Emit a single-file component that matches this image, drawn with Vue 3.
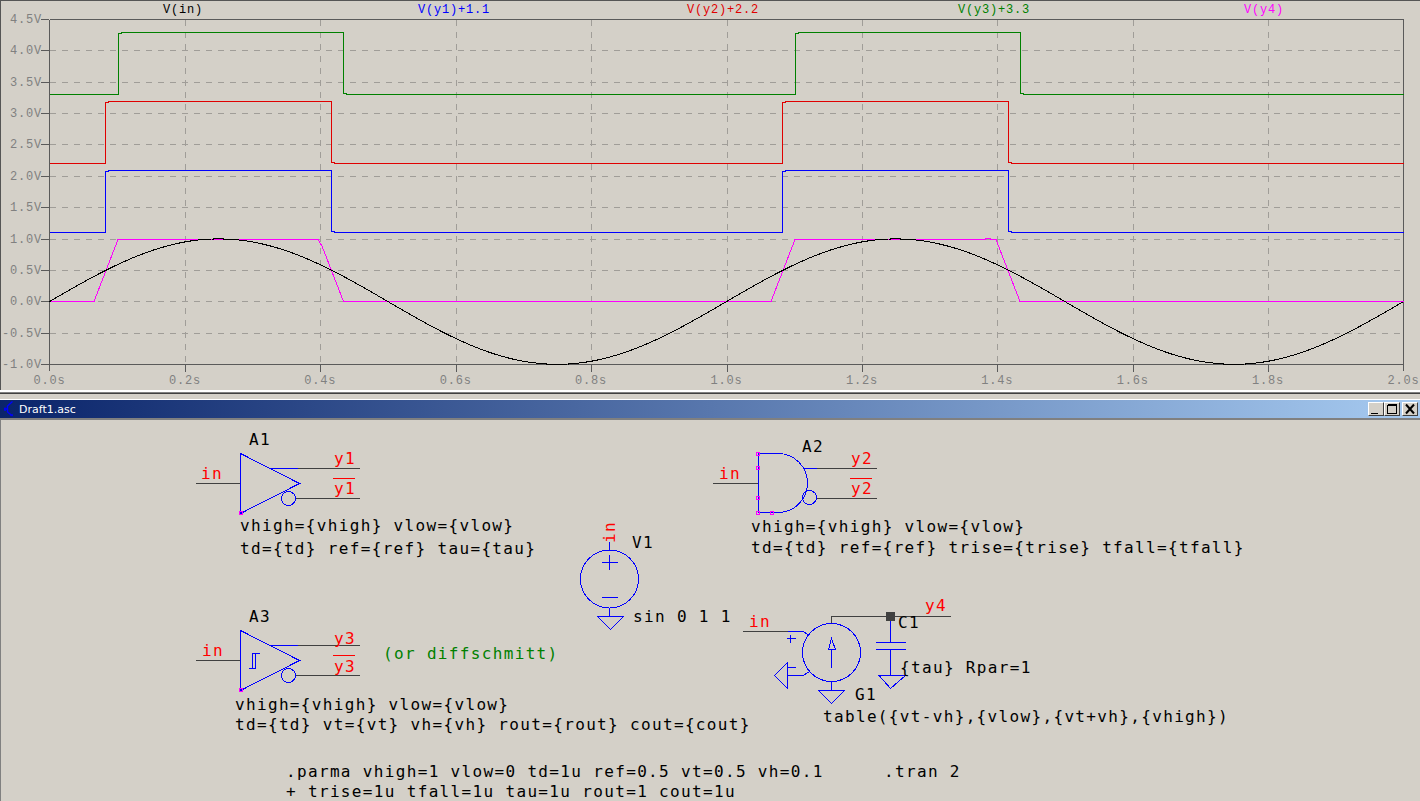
<template>
  <div class="desk">
    <section class="plot">
      <svg class="canvas" viewBox="0 0 1420 390" width="1420" height="390">
        <g class="grid">
          <line v-for="x in gridX" :key="'gx' + x" :x1="x" :x2="x" y1="20" y2="364" />
          <line v-for="y in gridY" :key="'gy' + y" x1="50" x2="1403" :y1="y" :y2="y" />
        </g>
        <path class="frame" :d="framePath" />
        <text v-for="t in yLabels" :key="t.s" class="axis" x="42" text-anchor="end" :y="t.y">{{ t.s }}</text>
        <text v-for="t in xLabels" :key="t.s" class="axis" :x="t.x" text-anchor="middle" y="384">{{ t.s }}</text>
        <text v-for="t in traceLabels" :key="t.s" class="trace-label" :x="t.x" y="13" :fill="t.c">{{ t.s }}</text>
        <polyline class="wave" stroke="#0000ff" :points="blue" />
        <polyline class="wave" stroke="#e00000" :points="red" />
        <polyline class="wave" stroke="#008000" :points="green" />
        <polyline class="wave" stroke="#ff00ff" :points="magenta" />
        <polyline class="wave" stroke="#000000" :points="sine" />
      </svg>
    </section>

    <div class="splitter"></div>

    <header class="titlebar">
      <svg class="app-icon" viewBox="0 0 14 16" width="14" height="16">
        <path d="M9.5 0.5 L4.5 5 V11 L9.5 15 M1 8 H4.5 M2 6.5 V10 M7 14 H10" />
      </svg>
      <span class="title">Draft1.asc</span>
      <div class="win-btns">
        <button class="win-btn">
          <svg viewBox="0 0 14 12" width="14" height="12"><path class="glyph" d="M2 10.5 H9" /></svg>
        </button>
        <button class="win-btn">
          <svg viewBox="0 0 14 12" width="14" height="12"><path class="glyph" d="M2.5 2.5 H11.5 V10.5 H2.5 Z M2.5 1.5 H11.5" /></svg>
        </button>
        <button class="win-btn close">
          <svg viewBox="0 0 14 12" width="14" height="12"><path class="glyph heavy" d="M3 1.5 L11 10.5 M11 1.5 L3 10.5" /></svg>
        </button>
      </div>
    </header>

    <section class="sheet">
      <svg class="canvas" viewBox="1 420 1419 381" width="1419" height="381">
        <path class="wire" :d="wires" />
        <path class="sym" :d="symbols" />
        <g class="sym">
          <circle v-for="c in circles" :key="c.x + '-' + c.y" :cx="c.x" :cy="c.y" :r="c.r" />
        </g>
        <rect v-for="p in pins" :key="p[0] + '-' + p[1]" class="pin" :x="p[0] - 1.5" :y="p[1] - 1.5" width="3" height="3" />
        <rect class="dot" x="886" y="612" width="9" height="9" />
        <path class="bar" :d="overbars" />
        <text v-for="t in texts" :key="t.s + t.x + t.y" class="sch" :class="t.k" :x="t.x" :y="t.y">{{ t.s }}</text>
        <text class="sch net" transform="translate(615 543) rotate(-90)">in</text>
      </svg>
    </section>
  </div>
</template>

<script setup>
const tx = (t) => 49.5 + 677 * t
const vy = (v) => 301.77 - 62.72 * v

const gridX = Array.from({ length: 9 }, (_, i) => Math.round(tx((i + 1) * 0.2)) + 0.5)
const gridY = Array.from({ length: 10 }, (_, i) => Math.floor(vy(4 - i * 0.5)) + 0.5)

let framePath = 'M49.5 19.5 H1403.5 V371 M49.5 19.5 V371 M41 364.5 H1403.5 M41 19.5 H49'
for (const x of gridX) framePath += ` M${x} 364 V372`
for (const y of gridY) framePath += ` M41 ${y} H49`

const yLabels = Array.from({ length: 12 }, (_, i) => {
  const v = 4.5 - i * 0.5
  return { s: v.toFixed(1) + 'V', y: Math.floor(vy(v)) + 4 }
})
const xLabels = Array.from({ length: 11 }, (_, i) => ({
  s: (i * 0.2).toFixed(1) + 's',
  x: tx(i * 0.2),
}))
const traceLabels = [
  { s: 'V(in)', x: 163, c: '#000000' },
  { s: 'V(y1)+1.1', x: 418, c: '#0000ff' },
  { s: 'V(y2)+2.2', x: 687, c: '#e00000' },
  { s: 'V(y3)+3.3', x: 958, c: '#008000' },
  { s: 'V(y4)', x: 1244, c: '#ff00ff' },
]

// square pulses: low level, high level, edges as x pairs
function pulse(lo, hi, edges) {
  const pts = [[49.5, lo]]
  for (const [up, down] of edges) {
    pts.push([up, lo], [up, hi + 1], [up + 3, hi + 1], [up + 3, hi], [down, hi], [down, lo - 1], [down + 3, lo - 1], [down + 3, lo])
  }
  pts.push([1403.5, lo])
  return pts.map((p) => p.join(',')).join(' ')
}

const blue = pulse(232.5, 170.5, [[105.5, 331.5], [782.5, 1008.5]])
const red = pulse(163.5, 101.5, [[105.5, 331.5], [782.5, 1008.5]])
const green = pulse(94.5, 32.5, [[118.5, 343.5], [795.5, 1020.5]])

const magenta = [
  [49.5, 301.5], [94, 301.5], [118, 239.5], [318, 239.5], [322, 246], [343.5, 301.5],
  [771, 301.5], [795, 239.5], [985, 239.5], [986, 238.5], [990, 238.5], [991, 239.5], [996, 239.5], [1020, 301.5], [1403.5, 301.5],
].map((p) => p.join(',')).join(' ')

const sine = Array.from({ length: 1355 }, (_, i) => {
  const x = 49.5 + i
  return `${x},${(301.6 - 62.7 * Math.sin((2 * Math.PI * i) / 677)).toFixed(1)}`
}).join(' ')

const wires = [
  'M196 483.5 H240', 'M298 468.5 H360', 'M296 498.5 H360',
  'M713 483.5 H758', 'M817 468.5 H877', 'M817 498.5 H877',
  'M196 660.5 H240', 'M298 645.5 H360', 'M296 675.5 H360',
  'M743 631.5 H788', 'M831.5 623 V616.5 H951',
].join(' ')

const symbols = [
  // A1
  'M240.5 453.5 L299.5 483.5 L240.5 513.5 Z M270 468.5 H298',
  // A2
  'M758.5 453.5 H778 A29.5 29.5 0 0 1 778 512.5 H758.5 Z M803 468.5 H817',
  // A3
  'M240.5 630.5 L299.5 660.5 L240.5 690.5 Z M270 645.5 H298',
  'M248.5 668.5 H255.5 V653.5 M252.5 668.5 V653.5 H259.5',
  // V1
  'M609.5 542 V550 M601.5 562.5 H617.5 M609.5 555 V570 M601.5 597.5 H617.5 M609.5 608 V616.5',
  'M597.5 616.5 H623.5 L610.5 629.5 Z',
  // G1
  'M788 631.5 H803 L809 635 M786.5 638.5 H795.5 M790.5 635 V643 M787.5 667.5 H795.5',
  'M787.5 662.5 V688.5 L774.5 675.5 Z M787.5 675.5 H803 L809 672',
  'M831.5 668 V649 M828.5 649.5 L831.5 638.5 L835.5 649.5 Z',
  'M831.5 681 V690.5 M818.5 690.5 H844.5 L831.5 703.5 Z',
  // C1
  'M890.5 621 V642.5 M876 642.5 H906 M876 649.5 H906 M890.5 649.5 V675.5 M879 675.5 H905.5 L890.5 688.5 Z',
].join(' ')

const circles = [
  { x: 288.5, y: 498.5, r: 7 },
  { x: 809.5, y: 497.5, r: 7 },
  { x: 288.5, y: 675.5, r: 7 },
  { x: 609.5, y: 579, r: 29 },
  { x: 831.5, y: 652.5, r: 29 },
]

const pins = [
  [241, 513], [241, 690],
  [758, 454], [758, 468], [758, 498], [758, 513], [772, 513],
]

const overbars = 'M333 478.5 H355 M850 478.5 H872 M333 655.5 H355'

const texts = [
  { s: 'A1', x: 249, y: 445 },
  { s: 'in', x: 201, y: 479, k: 'net' },
  { s: 'y1', x: 334, y: 464, k: 'net' },
  { s: 'y1', x: 334, y: 494, k: 'net' },
  { s: 'vhigh={vhigh} vlow={vlow}', x: 240, y: 531 },
  { s: 'td={td} ref={ref} tau={tau}', x: 240, y: 554 },
  { s: 'A2', x: 802, y: 452 },
  { s: 'in', x: 719, y: 479, k: 'net' },
  { s: 'y2', x: 851, y: 464, k: 'net' },
  { s: 'y2', x: 851, y: 494, k: 'net' },
  { s: 'vhigh={vhigh} vlow={vlow}', x: 751, y: 532 },
  { s: 'td={td} ref={ref} trise={trise} tfall={tfall}', x: 751, y: 553 },
  { s: 'V1', x: 632, y: 548 },
  { s: 'sin 0 1 1', x: 633, y: 622 },
  { s: 'A3', x: 249, y: 622 },
  { s: 'in', x: 202, y: 656, k: 'net' },
  { s: 'y3', x: 334, y: 644, k: 'net' },
  { s: 'y3', x: 334, y: 672, k: 'net' },
  { s: '(or diffschmitt)', x: 383, y: 659, k: 'note' },
  { s: 'vhigh={vhigh} vlow={vlow}', x: 235, y: 710 },
  { s: 'td={td} vt={vt} vh={vh} rout={rout} cout={cout}', x: 235, y: 730 },
  { s: 'in', x: 749, y: 627, k: 'net' },
  { s: 'y4', x: 925, y: 611, k: 'net' },
  { s: 'C1', x: 898, y: 628 },
  { s: '{tau} Rpar=1', x: 900, y: 673 },
  { s: 'G1', x: 855, y: 700 },
  { s: 'table({vt-vh},{vlow},{vt+vh},{vhigh})', x: 823, y: 722 },
  { s: '.parma vhigh=1 vlow=0 td=1u ref=0.5 vt=0.5 vh=0.1', x: 286, y: 777 },
  { s: '.tran 2', x: 884, y: 777 },
  { s: '+ trise=1u tfall=1u tau=1u rout=1 cout=1u', x: 286, y: 797 },
]
</script>

<style scoped>
.desk{ width:1420px; height:801px; overflow:hidden; display:flex; flex-direction:column; background:#d4d0c8; }
.plot{ height:390px; flex:none; border-top:1px solid #555; border-left:1px solid #555; box-sizing:border-box; }
.plot .canvas{ margin:-1px 0 0 -1px; }
.canvas{ display:block; }
.grid line{ stroke:#a09d98; stroke-width:1; stroke-dasharray:6 6; shape-rendering:crispEdges; }
.frame{ fill:none; stroke:#5a5a5a; stroke-width:1; shape-rendering:crispEdges; }
.axis{ font:12px "Liberation Mono", monospace; letter-spacing:.8px; fill:#808080; }
.trace-label{ font:12px "Liberation Mono", monospace; letter-spacing:.8px; }
.wave{ fill:none; stroke-width:1; shape-rendering:crispEdges; }

.splitter{ height:10px; flex:none; box-sizing:border-box; border-top:2px solid #fff; border-bottom:1px solid #fff; background:linear-gradient(#808080 0 1px, #404040 1px 2px, #d4d0c8 2px); }

.titlebar{ height:18px; flex:none; display:flex; align-items:center; padding:0 2px 0 3px; background:linear-gradient(90deg, #0a246a, #a6caf0); border-bottom:2px solid #808080; box-sizing:content-box; }
.app-icon{ flex:none; }
.app-icon path{ fill:none; stroke:#0000ff; stroke-width:1.4; }
.title{ margin-left:2px; font:11px "DejaVu Sans", sans-serif; color:#fff; }
.win-btns{ margin-left:auto; display:flex; }
.win-btn{ width:16px; height:14px; padding:0; display:flex; align-items:center; justify-content:center; background:#d4d0c8; border:1px solid; border-color:#fff #404040 #404040 #fff; }
.win-btn.close{ margin-left:2px; }
.glyph{ fill:none; stroke:#000; stroke-width:1; shape-rendering:crispEdges; }
.glyph.heavy{ stroke-width:2; shape-rendering:auto; }

.sheet{ flex:1; min-height:0; border-left:1px solid #808080; }
.wire{ fill:none; stroke:#404040; stroke-width:1; shape-rendering:crispEdges; }
.sym{ fill:none; stroke:#0000ff; stroke-width:1; shape-rendering:crispEdges; }
.pin{ fill:none; stroke:#ff00ff; stroke-width:1; shape-rendering:crispEdges; }
.dot{ fill:#404040; }
.bar{ fill:none; stroke:#ff0000; stroke-width:1; shape-rendering:crispEdges; }
.sch{ font:16px "DejaVu Sans Mono", monospace; letter-spacing:1.34px; fill:#000; }
.net{ fill:#ff0000; }
.note{ fill:#008000; }
</style>

<style>
html, body{ margin:0; background:#d4d0c8; }
</style>
